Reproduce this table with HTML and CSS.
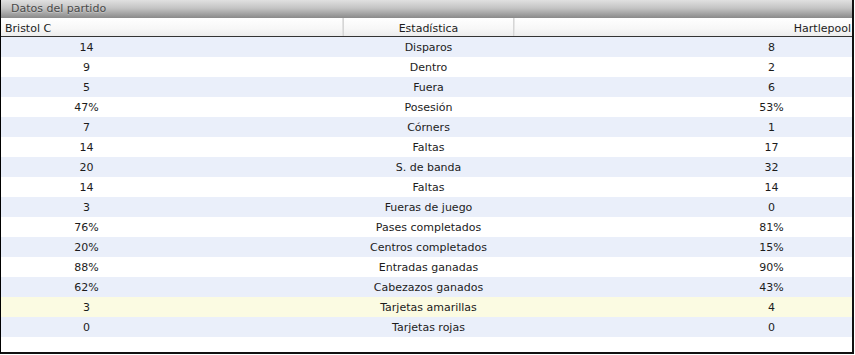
FILE: index.html
```html
<!DOCTYPE html>
<html lang="es">
<head>
<meta charset="utf-8">
<title>Datos del partido</title>
<link rel="stylesheet" href="styles.css">
</head>
<body>
<div class="panel">
  <div class="title">Datos del partido</div>
  <div class="head">
    <div class="h-left">Bristol C</div>
    <div class="h-mid">Estadística</div>
    <div class="h-right">Hartlepool</div>
  </div>
  <div class="rows">
    <div class="row alt"><span class="l">14</span><span class="m">Disparos</span><span class="r">8</span></div>
    <div class="row"><span class="l">9</span><span class="m">Dentro</span><span class="r">2</span></div>
    <div class="row alt"><span class="l">5</span><span class="m">Fuera</span><span class="r">6</span></div>
    <div class="row"><span class="l">47%</span><span class="m">Posesión</span><span class="r">53%</span></div>
    <div class="row alt"><span class="l">7</span><span class="m">Córners</span><span class="r">1</span></div>
    <div class="row"><span class="l">14</span><span class="m">Faltas</span><span class="r">17</span></div>
    <div class="row alt"><span class="l">20</span><span class="m">S. de banda</span><span class="r">32</span></div>
    <div class="row"><span class="l">14</span><span class="m">Faltas</span><span class="r">14</span></div>
    <div class="row alt"><span class="l">3</span><span class="m">Fueras de juego</span><span class="r">0</span></div>
    <div class="row"><span class="l">76%</span><span class="m">Pases completados</span><span class="r">81%</span></div>
    <div class="row alt"><span class="l">20%</span><span class="m">Centros completados</span><span class="r">15%</span></div>
    <div class="row"><span class="l">88%</span><span class="m">Entradas ganadas</span><span class="r">90%</span></div>
    <div class="row alt"><span class="l">62%</span><span class="m">Cabezazos ganados</span><span class="r">43%</span></div>
    <div class="row hl"><span class="l">3</span><span class="m">Tarjetas amarillas</span><span class="r">4</span></div>
    <div class="row alt"><span class="l">0</span><span class="m">Tarjetas rojas</span><span class="r">0</span></div>
  </div>
</div>
</body>
</html>
```
FILE: styles.css
```css
html, body {
  margin: 0;
  padding: 0;
  background: #ffffff;
}
body {
  font-family: "DejaVu Sans", Verdana, sans-serif;
  font-size: 11px;
  color: #1c1c1c;
}
.panel {
  width: 851px;
  height: 352px;
  border-left: 1px solid #000000;
  border-right: 2px solid #111111;
  border-bottom: 2px solid #111111;
  background: #ffffff;
  display: flex;
  flex-direction: column;
}
.title {
  height: 18px;
  line-height: 18px;
  padding-left: 10px;
  font-size: 11px;
  color: #4a4a4a;
  background: linear-gradient(to bottom, #e0e0e0 0%, #c4c4c4 45%, #8a8a8a 100%);
  text-shadow: 0 1px 0 rgba(255,255,255,0.3);
  overflow: hidden;
}
.head {
  height: 18px;
  line-height: 21px;
  overflow: hidden;
  display: grid;
  grid-template-columns: 342px 171px 1fr;
  background: linear-gradient(to bottom, #ffffff 0%, #f7f7f7 60%, #ececec 100%);
  border-bottom: 1px solid #333333;
}
.h-left {
  padding-left: 4px;
  box-shadow: inset -5px 0 0 -4px #e2e2e2;
}
.h-mid {
  text-align: center;
  border-left: 1px solid #d6d6d6;
  border-right: 1px solid #d6d6d6;
}
.h-right {
  text-align: right;
  padding-right: 1px;
  box-shadow: inset 4px 0 0 -3px #e6e6e6;
}
.rows {
  display: flex;
  flex-direction: column;
}
.row {
  height: 20px;
  line-height: 22px;
  overflow: hidden;
  display: grid;
  grid-template-columns: 171px 171px 171px 1fr 161px;
  background: #ffffff;
}
.row.alt {
  background: #eaeffa;
}
.row.hl {
  background: #fbfbe2;
}
.row span {
  text-align: center;
  white-space: nowrap;
}
.row .l { grid-column: 1; }
.row .m { grid-column: 3; }
.row .r { grid-column: 5; }
```
